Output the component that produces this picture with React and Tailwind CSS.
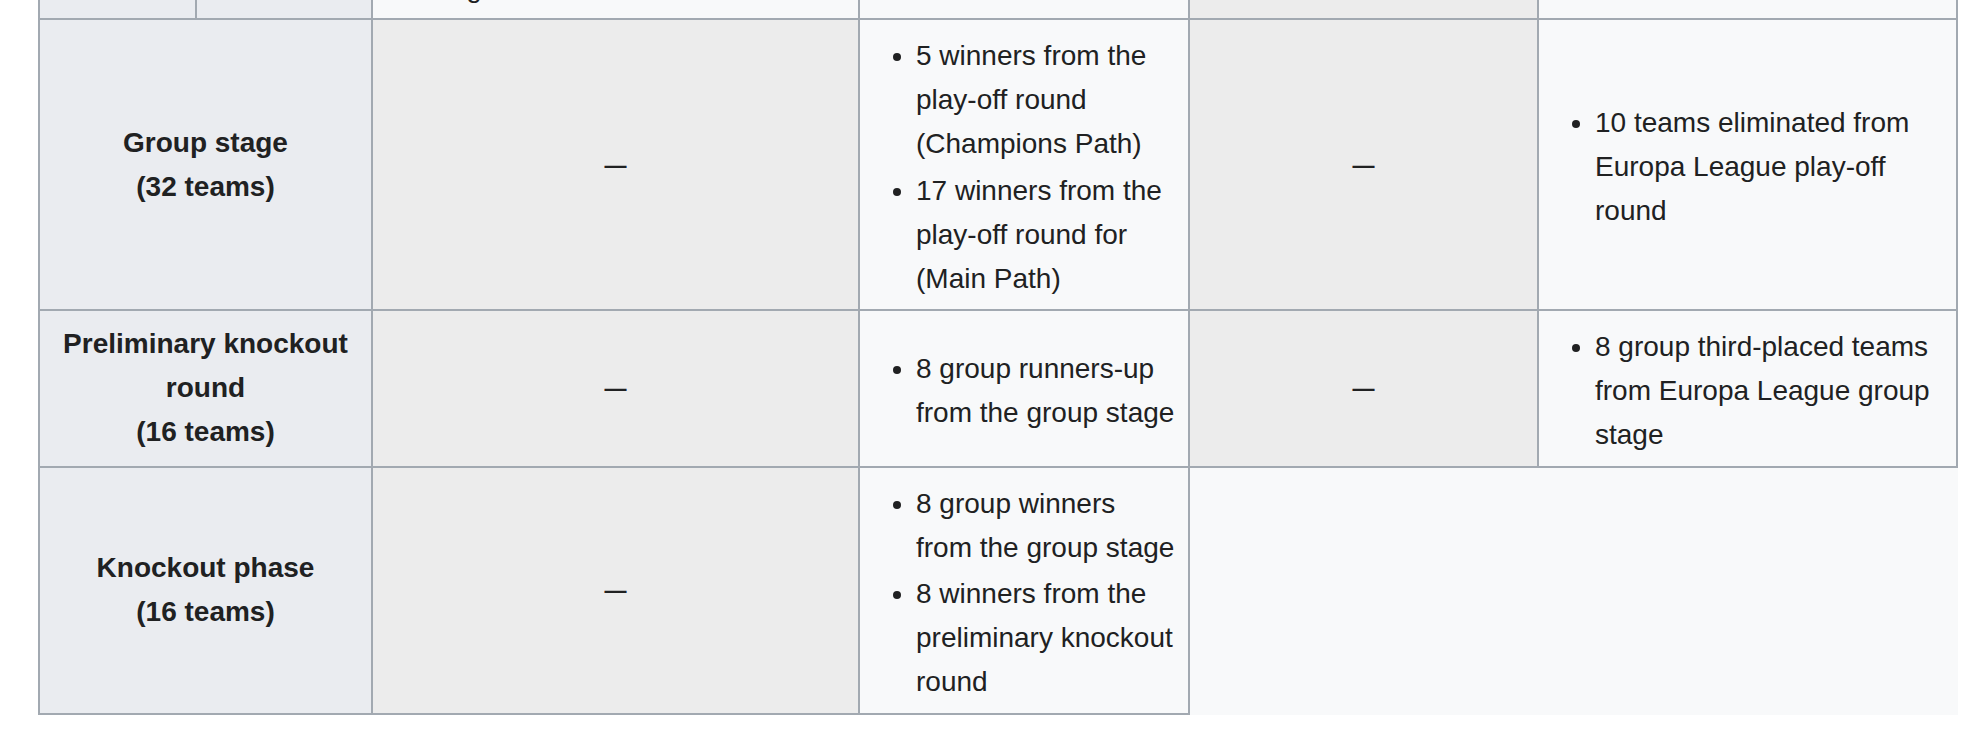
import React from "react";

const cell = "border-2 border-[#a2a9b1] py-[5.6px] px-[11.2px]";
const head = cell + " bg-[#eaecf0] font-bold text-center";
const light = cell + " bg-[#f8f9fa] text-left";
const grey = cell + " bg-[#ececec] text-center";

function Dash() {
  return <span className="text-[22px] font-bold">—</span>;
}

function List({ items }) {
  return (
    <ul className="list-disc mt-[8.4px] ml-[44.8px]">
      {items.map((t, i) => (
        <li key={i} className="mb-[2.8px]">
          {t}
        </li>
      ))}
    </ul>
  );
}

export default function App() {
  return (
    <div className="h-[734px] overflow-hidden bg-white font-['Liberation_Sans',Arial,sans-serif] text-[28px] leading-[44px] text-[#202122]">
      <table className="table-fixed border-collapse bg-[#f8f9fa] w-[1920px] ml-[38px] -mt-[112px]">
        <colgroup>
          <col className="w-[157px]" />
          <col className="w-[176px]" />
          <col className="w-[487px]" />
          <col className="w-[330px]" />
          <col className="w-[349px]" />
          <col className="w-[419px]" />
        </colgroup>
        <tbody>
          <tr className="h-[130px]">
            <th className={head}></th>
            <th className={head}></th>
            <td className={light + " align-bottom"}>
              <ul className="list-disc ml-[44.8px]">
                <li className="mb-[2.8px]">
                  1 team from the domestic
                  <br />
                  league
                </li>
              </ul>
            </td>
            <td className={light}></td>
            <td className={grey}></td>
            <td className={light}></td>
          </tr>
          <tr>
            <th colSpan={2} className={head}>
              Group stage
              <br />
              (32 teams)
            </th>
            <td className={grey}>
              <Dash />
            </td>
            <td className={light}>
              <List
                items={[
                  "5 winners from the play-off round (Champions Path)",
                  "17 winners from the play-off round for (Main Path)",
                ]}
              />
            </td>
            <td className={grey}>
              <Dash />
            </td>
            <td className={light}>
              <List items={["10 teams eliminated from Europa League play-off round"]} />
            </td>
          </tr>
          <tr>
            <th colSpan={2} className={head}>
              Preliminary knockout round
              <br />
              (16 teams)
            </th>
            <td className={grey}>
              <Dash />
            </td>
            <td className={light}>
              <List items={["8 group runners-up from the group stage"]} />
            </td>
            <td className={grey}>
              <Dash />
            </td>
            <td className={light}>
              <List items={["8 group third-placed teams from Europa League group stage"]} />
            </td>
          </tr>
          <tr>
            <th colSpan={2} className={head}>
              Knockout phase
              <br />
              (16 teams)
            </th>
            <td className={grey}>
              <Dash />
            </td>
            <td className={light}>
              <List
                items={[
                  "8 group winners from the group stage",
                  "8 winners from the preliminary knockout round",
                ]}
              />
            </td>
          </tr>
        </tbody>
      </table>
    </div>
  );
}
